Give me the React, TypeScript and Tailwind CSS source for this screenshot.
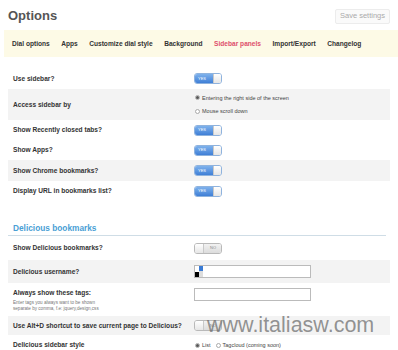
import React from 'react';

const font = { fontFamily: '"Liberation Sans", Arial, sans-serif' };

function Toggle({ on }: { on: boolean }) {
  if (on) {
    return (
      <div className="flex h-[11px] w-[28px] overflow-hidden rounded-[3px] border border-[#8fb3de]">
        <div className="flex w-[19px] items-center bg-gradient-to-b from-[#7fb2ec] to-[#3f7fd6] pl-[3px] text-[4px] text-white">YES</div>
        <div className="w-[9px] border-l border-[#c9c9c9] bg-gradient-to-b from-white to-[#e6e6e6]" />
      </div>
    );
  }
  return (
    <div className="flex h-[11px] w-[28px] overflow-hidden rounded-[3px] border border-[#b9b9b9]">
      <div className="w-[9px] border-r border-[#c9c9c9] bg-gradient-to-b from-white to-[#e6e6e6]" />
      <div className="flex flex-1 items-center justify-end bg-gradient-to-b from-[#f2f2f2] to-[#dcdcdc] pr-[5px] text-[4px] text-[#888]">NO</div>
    </div>
  );
}

function Radio({ checked }: { checked?: boolean }) {
  return (
    <span className="flex h-[5px] w-[5px] items-center justify-center rounded-full border border-[#aaa] bg-white">
      {checked && <span className="h-[3px] w-[3px] rounded-full bg-[#555]" />}
    </span>
  );
}

function Row({ label, gray, h, children }: { label: React.ReactNode; gray?: boolean; h: string; children?: React.ReactNode }) {
  return (
    <div className={`flex items-center ${h} ${gray ? 'bg-[#f3f3f3]' : ''}`}>
      <div className="w-[186px] shrink-0 whitespace-nowrap pl-[5px] text-[6.6px] font-bold text-[#333]">{label}</div>
      <div className="flex flex-1 items-center">{children}</div>
    </div>
  );
}

export default function App() {
  const tabs = ['Dial options', 'Apps', 'Customize dial style', 'Background', 'Sidebar panels', 'Import/Export', 'Changelog'];
  return (
    <div className="relative h-[350px] w-[398px] overflow-hidden bg-white" style={font}>
      {/* Header */}
      <header className="flex h-[30px] items-center justify-between px-[8px] pt-[2px]">
        <h1 className="text-[13px] font-bold text-[#555]">Options</h1>
        <button className="h-[15px] rounded-[2px] border border-[#ececec] bg-[#fafafa] px-[4px] text-[7.5px] text-[#aaa]">Save settings</button>
      </header>

      {/* Tabs */}
      <nav className="ml-[4px] flex h-[27px] items-center gap-[11.5px] bg-[#fdfae6] pl-[8px]">
        {tabs.map((t) => (
          <span key={t} className={`text-[6.6px] font-bold ${t === 'Sidebar panels' ? 'text-[#dd4f6b]' : 'text-[#333]'}`}>{t}</span>
        ))}
      </nav>

      <main className="mx-[8px] mt-[11px]">
        <Row label="Use sidebar?" h="h-[21px]"><Toggle on /></Row>
        <Row label="Access sidebar by" gray h="h-[31px]">
          <div className="flex flex-col gap-[5px] pl-[1px] text-[5.5px] text-[#444]">
            <div className="flex items-center gap-[2px]"><Radio checked />Entering the right side of the screen</div>
            <div className="flex items-center gap-[2px]"><Radio />Mouse scroll down</div>
          </div>
        </Row>
        <Row label="Show Recently closed tabs?" h="h-[20px]"><Toggle on /></Row>
        <Row label="Show Apps?" h="h-[20px]"><Toggle on /></Row>
        <Row label="Show Chrome bookmarks?" gray h="h-[21px]"><Toggle on /></Row>
        <Row label="Display URL in bookmarks list?" h="h-[20px]"><Toggle on /></Row>

        <h2 className="mt-[21px] mr-[4px] border-b border-[#cfdde6] pb-[1px] pl-[5px] text-[8.3px] font-bold text-[#4aa0d5]">Delicious bookmarks</h2>

        <Row label="Show Delicious bookmarks?" h="h-[24px]"><Toggle on={false} /></Row>
        <Row label="Delicious username?" gray h="h-[23px]">
          <div className="relative h-[13px] w-[117px] border border-[#bbb] bg-white">
            <span className="absolute left-0 top-[6px] h-[5px] w-[4px] bg-black" />
            <span className="absolute left-[4px] top-0 h-[5px] w-[4px] bg-[#3a7bd5]" />
            <span className="absolute left-[4px] top-[5px] h-[6px] w-[4px] bg-[#ddd]" />
          </div>
        </Row>
        <div className="flex h-[33px] items-start pt-[5px]">
          <div className="w-[186px] shrink-0 pl-[5px]">
            <div className="text-[6.6px] font-bold text-[#333]">Always show these tags:</div>
            <div className="mt-[2px] text-[4.6px] leading-[5.5px] text-[#777]">Enter tags you always want to be shown<br />separate by comma, f.e: jquery,design,css</div>
          </div>
          <div className="h-[13px] w-[117px] border border-[#bbb] bg-white" />
        </div>
        <Row label="Use Alt+D shortcut to save current page to Delicious?" gray h="h-[19px]"><Toggle on={false} /></Row>
        <Row label="Delicious sidebar style" h="h-[20px]">
          <div className="flex items-center gap-[5px] pl-[1px] text-[5.5px] text-[#444]">
            <div className="flex items-center gap-[2px]"><Radio checked />List</div>
            <div className="flex items-center gap-[2px]"><Radio />Tagcloud (coming soon)</div>
          </div>
        </Row>
      </main>

      {/* watermark */}
      <div className="absolute left-[207px] top-[315px] text-[21.5px] leading-none text-[#666]/70">www.italiasw.com</div>
    </div>
  );
}
